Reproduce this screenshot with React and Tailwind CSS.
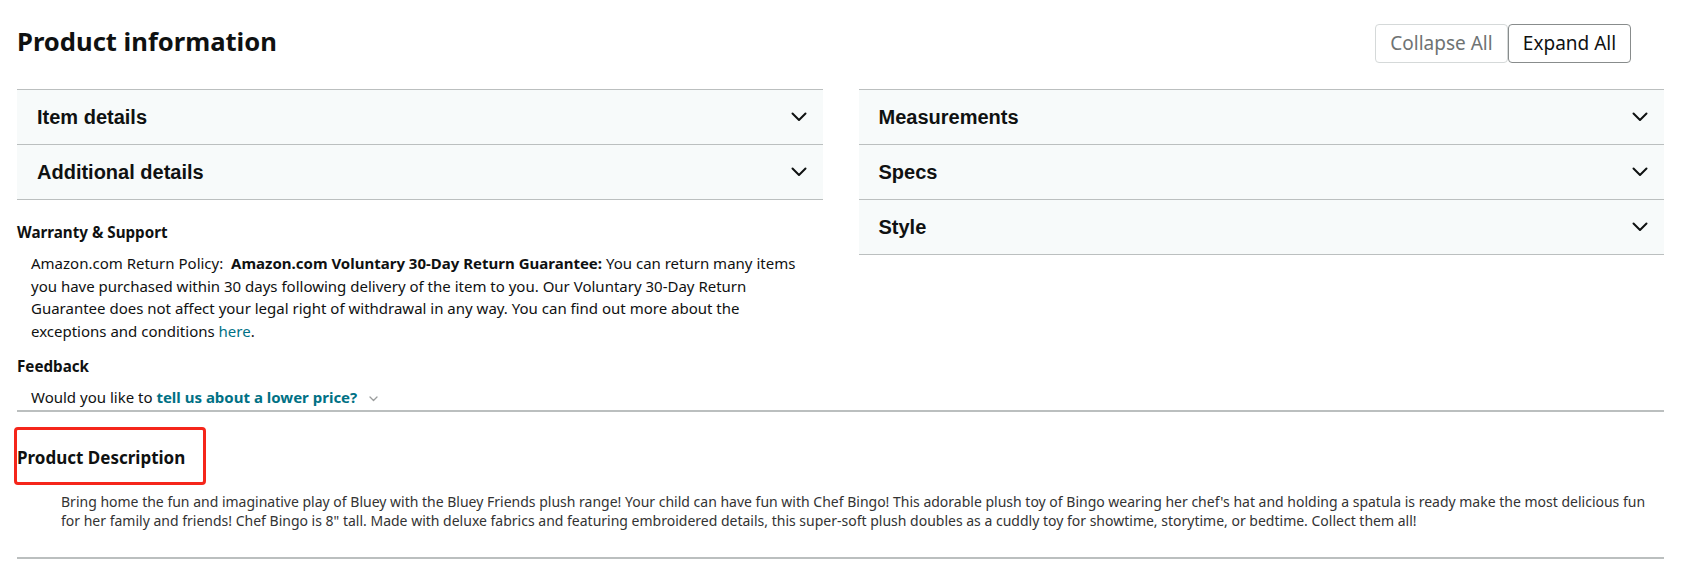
import React from 'react';

const Chevron = () => (
    <svg width="16" height="10" viewBox="0 0 16 10" fill="none" className="shrink-0">
        <polyline points="1.5,1.5 8,8 14.5,1.5" stroke="#0f1111" strokeWidth="2" strokeLinecap="round" strokeLinejoin="round" />
    </svg>
);

const SmallChevron = () => (
    <svg width="9" height="6" viewBox="0 0 9 6" fill="none" className="inline-block ml-[12px] align-middle">
        <polyline points="1,1 4.5,4.5 8,1" stroke="#9a9d9d" strokeWidth="1.3" strokeLinecap="round" strokeLinejoin="round" />
    </svg>
);

const AccordionRow = ({ label }) => (
    <div className="h-[55px] border-t border-[#bbbfbf] bg-[#f7fafa] flex items-center justify-between pl-[20px] pr-[16px]">
        <span className="font-['Liberation_Sans',Arial,sans-serif] font-bold text-[20px] text-[#0f1111]">{label}</span>
        <Chevron />
    </div>
);

export default function App() {
    return (
        <div className="bg-white min-h-screen pl-[17px] pr-[33px] pt-[24px] font-['Noto_Sans',sans-serif] text-[#0f1111]">

            {/* ── Header ── */}
            <div className="flex justify-between items-start">
                <h2 className="mt-[2px] text-[25.6px] leading-[32px] font-bold">Product information</h2>
                <div className="flex mr-[33px]">
                    <button className="h-[39px] w-[133px] border border-[#d5d9d9] rounded-[4px] bg-white text-[19px] text-[#6f7373]">Collapse All</button>
                    <button className="h-[39px] w-[123px] border border-[#888c8c] rounded-[4px] bg-white text-[19px] text-[#0f1111]">Expand All</button>
                </div>
            </div>

            {/* ── Accordions ── */}
            <div className="grid grid-cols-2 gap-x-[36px] items-start mt-[26px]">
                <div>
                    <div className="border-b border-[#bbbfbf]">
                        <AccordionRow label="Item details" />
                        <AccordionRow label="Additional details" />
                    </div>

                    <h3 className="mt-[20px] text-[15.2px] leading-[24px] font-bold">Warranty &amp; Support</h3>
                    <p className="mt-[8px] pl-[14px] pr-[4px] text-[15px] leading-[22.5px]">
                        Amazon.com Return Policy:&nbsp; <span className="font-bold">Amazon.com Voluntary 30-Day Return Guarantee:</span> You can return many items you have purchased within 30 days following delivery of the item to you. Our Voluntary 30-Day Return Guarantee does not affect your legal right of withdrawal in any way. You can find out more about the exceptions and conditions <span className="text-[#007185]">here</span>.
                    </p>

                    <h3 className="mt-[12px] text-[15.2px] leading-[24px] font-bold">Feedback</h3>
                    <p className="mt-[8px] pl-[14px] text-[15px] leading-[22.5px]">
                        Would you like to <span className="font-bold text-[#007185]">tell us about a lower price?</span>
                        <SmallChevron />
                    </p>
                </div>

                <div className="border-b border-[#bbbfbf]">
                    <AccordionRow label="Measurements" />
                    <AccordionRow label="Specs" />
                    <AccordionRow label="Style" />
                </div>
            </div>

            <div className="mt-[1px] border-t-2 border-[#bbbfbf]" />

            {/* ── Product Description ── */}
            <div className="relative w-fit mt-[34px]">
                <h2 className="text-[17px] leading-[24px] font-bold">Product Description</h2>
                <div className="absolute -left-[3px] -top-[19px] w-[192px] h-[58px] border-[3px] border-[#f5261b] rounded-[4px]" />
            </div>
            <p className="mt-[22px] pl-[44px] pr-[8px] text-[14px] leading-[19px] text-[#333333]">
                Bring home the fun and imaginative play of Bluey with the Bluey Friends plush range! Your child can have fun with Chef Bingo! This adorable plush toy of Bingo wearing her chef's hat and holding a spatula is ready make the most delicious fun for her family and friends! Chef Bingo is 8" tall. Made with deluxe fabrics and featuring embroidered details, this super-soft plush doubles as a cuddly toy for showtime, storytime, or bedtime. Collect them all!
            </p>

            <div className="mt-[27px] border-t-2 border-[#bbbfbf]" />
        </div>
    );
}
